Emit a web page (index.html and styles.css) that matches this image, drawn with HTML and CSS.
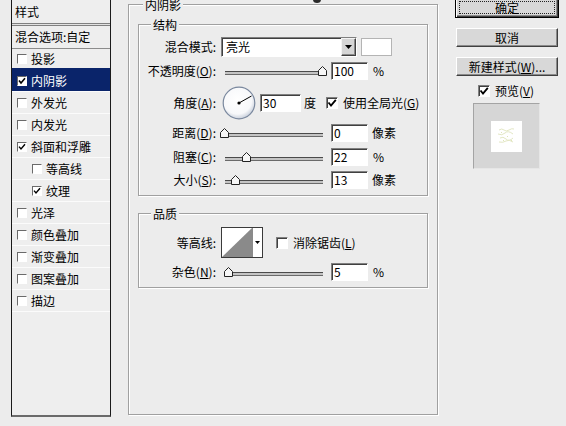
FILE: index.html
```html
<!DOCTYPE html>
<html lang="zh-CN">
<head>
<meta charset="utf-8">
<title>图层样式</title>
<link rel="stylesheet" href="styles.css">
</head>
<body>
<div class="dlg">
  <div class="styles">
    <div class="st-head">样式</div>
    <div class="st-dbl"></div>
    <div class="st-blend">混合选项:自定</div>
    <div class="st-item first"><span class="cbs"></span>投影</div>
    <div class="st-item sel"><span class="cbs"><svg width="8" height="8" viewBox="0 0 8 8"><polyline points="1,3.6 3,6 7,1.3" fill="none" stroke="#000" stroke-width="1.6"/></svg></span>内阴影</div>
    <div class="st-item"><span class="cbs"></span>外发光</div>
    <div class="st-item"><span class="cbs"></span>内发光</div>
    <div class="st-item"><span class="cbs"><svg width="8" height="8" viewBox="0 0 8 8"><polyline points="1,3.6 3,6 7,1.3" fill="none" stroke="#000" stroke-width="1.4"/></svg></span>斜面和浮雕</div>
    <div class="st-item sub"><span class="cbs"></span>等高线</div>
    <div class="st-item sub"><span class="cbs"><svg width="8" height="8" viewBox="0 0 8 8"><polyline points="1,3.6 3,6 7,1.3" fill="none" stroke="#000" stroke-width="1.4"/></svg></span>纹理</div>
    <div class="st-item"><span class="cbs"></span>光泽</div>
    <div class="st-item"><span class="cbs"></span>颜色叠加</div>
    <div class="st-item"><span class="cbs"></span>渐变叠加</div>
    <div class="st-item"><span class="cbs"></span>图案叠加</div>
    <div class="st-item"><span class="cbs"></span>描边</div>
    <div class="st-end"></div>
  </div>

  <div class="main">
    <div class="grp outer">
      <div class="gt">内阴影</div>

      <div class="grp inner struct">
        <div class="gt">结构</div>

        <div class="row r1">
          <div class="lbl">混合模式:</div>
          <div class="select"><span class="sv">亮光</span><span class="sbtn"><svg width="7" height="4" viewBox="0 0 7 4"><polygon points="0,0 7,0 3.5,4" fill="#000"/></svg></span></div>
          <div class="swatch"></div>
        </div>

        <div class="row r2">
          <div class="lbl">不透明度(<u>O</u>):</div>
          <div class="slider"><div class="track"></div><span class="thumb" style="left:97px"><svg width="9" height="10" viewBox="0 0 9 10"><polygon points="0.5,9.5 0.5,4.5 4.5,0.5 8.5,4.5 8.5,9.5" fill="#f6f6f6" stroke="#222"/></svg></span></div>
          <div class="num">100</div>
          <div class="unit">%</div>
        </div>

        <div class="row r3">
          <div class="lbl">角度(<u>A</u>):</div>
          <div class="dial"><svg width="34" height="34" viewBox="0 0 34 34">
            <defs><radialGradient id="dg" cx="45%" cy="40%" r="60%"><stop offset="0" stop-color="#ffffff"/><stop offset="0.75" stop-color="#f7f8fa"/><stop offset="1" stop-color="#c9d0dc"/></radialGradient></defs>
            <circle cx="17" cy="17" r="15.8" fill="url(#dg)" stroke="#7a889e" stroke-width="1.2"/>
            <line x1="17" y1="17" x2="29.5" y2="10" stroke="#000" stroke-width="1"/>
            <circle cx="17" cy="17" r="1.6" fill="#000"/>
          </svg></div>
          <div class="num w41">30</div>
          <div class="unit deg">度</div>
          <span class="cb gl"><svg width="10" height="10" viewBox="0 0 10 10"><polyline points="1.5,4.5 4,7.5 8.8,1.8" fill="none" stroke="#000" stroke-width="1.8"/></svg></span>
          <div class="cbl">使用全局光(<u>G</u>)</div>
        </div>

        <div class="row r4">
          <div class="lbl">距离(<u>D</u>):</div>
          <div class="slider"><div class="track"></div><span class="thumb" style="left:-1px"><svg width="9" height="10" viewBox="0 0 9 10"><polygon points="0.5,9.5 0.5,4.5 4.5,0.5 8.5,4.5 8.5,9.5" fill="#f6f6f6" stroke="#222"/></svg></span></div>
          <div class="num">0</div>
          <div class="unit px">像素</div>
        </div>

        <div class="row r5">
          <div class="lbl">阻塞(<u>C</u>):</div>
          <div class="slider"><div class="track"></div><span class="thumb" style="left:21px"><svg width="9" height="10" viewBox="0 0 9 10"><polygon points="0.5,9.5 0.5,4.5 4.5,0.5 8.5,4.5 8.5,9.5" fill="#f6f6f6" stroke="#222"/></svg></span></div>
          <div class="num">22</div>
          <div class="unit">%</div>
        </div>

        <div class="row r6">
          <div class="lbl">大小(<u>S</u>):</div>
          <div class="slider"><div class="track"></div><span class="thumb" style="left:10px"><svg width="9" height="10" viewBox="0 0 9 10"><polygon points="0.5,9.5 0.5,4.5 4.5,0.5 8.5,4.5 8.5,9.5" fill="#f6f6f6" stroke="#222"/></svg></span></div>
          <div class="num">13</div>
          <div class="unit px">像素</div>
        </div>
      </div>

      <div class="grp inner qual">
        <div class="gt">品质</div>

        <div class="row q1">
          <div class="lbl">等高线:</div>
          <div class="contour">
            <span class="cprev"><svg width="30" height="29" viewBox="0 0 30 29"><polygon points="0,29 30,0 30,29" fill="#8a8a8a"/></svg></span>
            <span class="cbtn"><svg width="5" height="3" viewBox="0 0 5 3"><polygon points="0,0 5,0 2.5,3" fill="#000"/></svg></span>
          </div>
          <span class="cb aa"></span>
          <div class="cbl">消除锯齿(<u>L</u>)</div>
        </div>

        <div class="row q2">
          <div class="lbl">杂色(<u>N</u>):</div>
          <div class="slider"><div class="track"></div><span class="thumb" style="left:3px"><svg width="9" height="10" viewBox="0 0 9 10"><polygon points="0.5,9.5 0.5,4.5 4.5,0.5 8.5,4.5 8.5,9.5" fill="#f6f6f6" stroke="#222"/></svg></span></div>
          <div class="num">5</div>
          <div class="unit">%</div>
        </div>
      </div>
    </div>
  </div>

  <div class="side">
    <div class="btn ok"><span class="focus">确定</span></div>
    <div class="btn">取消</div>
    <div class="btn">新建样式(<u>W</u>)...</div>
    <div class="pvrow">
      <span class="cb"><svg width="10" height="10" viewBox="0 0 10 10"><polyline points="1.5,4.5 4,7.5 8.8,1.8" fill="none" stroke="#000" stroke-width="1.8"/></svg></span>
      <span class="cbl">预览(<u>V</u>)</span>
    </div>
    <div class="pvbox">
      <div class="pvin"><svg width="31" height="31" viewBox="0 0 31 31">
        <g stroke="#e3e7c4" stroke-width="1" fill="none">
          <path d="M8 9 q3 -2 5 0 t5 0 t5 -1"/>
          <path d="M7 13 q4 2 7 -1 t8 1"/>
          <path d="M9 17 q3 -2 6 1 t7 -1"/>
          <path d="M8 21 q4 1 7 -1 t7 1"/>
        </g>
        <g fill="#dfe4b8">
          <rect x="10" y="11" width="1" height="1"/><rect x="16" y="15" width="1" height="1"/>
          <rect x="20" y="19" width="1" height="1"/><rect x="12" y="19" width="1" height="1"/>
        </g>
      </svg></div>
    </div>
  </div>
</div>
<span class="blob"></span>
</body>
</html>
```

FILE: styles.css
```css
* { box-sizing: border-box; }

html, body {
  margin: 0;
  padding: 0;
}

body {
  width: 566px;
  height: 426px;
  overflow: hidden;
  position: relative;
  background: #ececec;
  color: #000;
  font-family: "Noto Sans CJK SC", "Noto Sans", "Liberation Sans", sans-serif;
  font-size: 12px;
  line-height: 14px;
}

u { text-decoration: underline; text-underline-offset: 1px; }

.dlg {
  display: flex;
  align-items: flex-start;
}

/* ---------- left style list ---------- */
.styles {
  margin-left: 11px;
  width: 100px;
  height: 417px;
  border-left: 1px solid #1a1a1a;
  border-right: 1px solid #1a1a1a;
  border-bottom: 2px solid #6a6a6a;
  background: #eeeeee;
  flex: none;
}

.st-head {
  height: 23px;
  line-height: 23px;
  padding-left: 3px;
}

.st-dbl {
  height: 3px;
  border-top: 1px solid #808080;
  border-bottom: 1px solid #808080;
  background: #e2e2e2;
}

.st-blend {
  height: 23px;
  line-height: 22px;
  padding-left: 3px;
  border-bottom: 1px solid #8c8c8c;
}

.st-item {
  height: 22px;
  display: flex;
  align-items: center;
  padding-left: 5px;
  border-top: 1px solid #fbfbfb;
  white-space: nowrap;
}

.st-item.first {
  height: 20px;
  border-top: 0;
}

.st-item.sub { padding-left: 20px; }

.st-item.sel {
  background: #0a246a;
  color: #fff;
  border-top-color: #0a246a;
  box-shadow: 0 -1px 0 #0a246a;
}

.st-end {
  height: 1px;
  background: #fbfbfb;
}

.cbs {
  width: 10px;
  height: 10px;
  flex: none;
  margin-right: 4px;
  border: 1px solid;
  border-color: #6a6a6a #ffffff #ffffff #6a6a6a;
  background: #fff;
  display: flex;
  align-items: center;
  justify-content: center;
}

/* ---------- middle panel ---------- */
.main {
  margin-left: 17px;
  width: 310px;
  flex: none;
}

.grp {
  border: 1px solid #a0a0a0;
  box-shadow: 1px 1px 0 #ffffff, inset 1px 1px 0 #ffffff;
}

.outer {
  margin-top: 4px;
  width: 310px;
  height: 411px;
}

.gt {
  width: max-content;
  height: 13px;
  line-height: 13px;
  margin: -7px 0 0 14px;
  padding: 0 2px;
  background: #ececec;
}

.inner {
  margin-left: 9px;
  width: 290px;
}

.inner .gt { margin-left: 12px; }

.struct {
  margin-top: 13px;
  height: 172px;
}

.qual {
  margin-top: 17px;
  height: 75px;
}

.row {
  display: flex;
  align-items: center;
}

.lbl {
  width: 77px;
  margin-right: 5px;
  text-align: right;
  white-space: nowrap;
  flex: none;
}

.r1 { margin-top: 6px; height: 20px; }
.r2 { margin-top: 5px; height: 18px; }
.r3 { margin-top: 6px; height: 34px; }
.r4 { margin-top: 4px; height: 18px; }
.r5 { margin-top: 6px; height: 18px; }
.r6 { margin-top: 5px; height: 18px; }
.q1 { margin-top: 7px; height: 31px; }
.q2 { margin-top: 5px; height: 18px; }

.select {
  width: 136px;
  height: 20px;
  display: flex;
  align-items: stretch;
  border: 1px solid;
  border-color: #808080 #ffffff #ffffff #808080;
  box-shadow: inset 1px 1px 0 #404040;
  background: #fff;
}

.sv {
  flex: 1;
  padding-left: 4px;
  line-height: 18px;
}

.sbtn {
  width: 15px;
  display: flex;
  align-items: center;
  justify-content: center;
  background: #d6d6d6;
  border: 1px solid;
  border-color: #f4f4f4 #404040 #404040 #f4f4f4;
  box-shadow: inset -1px -1px 0 #8a8a8a;
}

.swatch {
  margin-left: 4px;
  width: 31px;
  height: 18px;
  border: 1px solid #b4b4b4;
  background: #ffffff;
}

.slider {
  position: relative;
  width: 110px;
  height: 18px;
  flex: none;
  display: flex;
  align-items: center;
}

.track {
  margin-left: 4px;
  margin-top: 3px;
  width: 98px;
  height: 4px;
  border-top: 1px solid #4a4a4a;
  border-bottom: 1px solid #6a6a6a;
  background: #c4c4c4;
}

.thumb {
  position: absolute;
  top: 4px;
  width: 9px;
  height: 10px;
  display: block;
}

.thumb svg { display: block; }

.num {
  width: 37px;
  height: 18px;
  flex: none;
  padding-left: 2px;
  line-height: 16px;
  border: 1px solid;
  border-color: #808080 #ffffff #ffffff #808080;
  box-shadow: inset 1px 1px 0 #404040;
  background: #ffffff;
}

.num.w41 { width: 41px; margin-left: 4px; }

.unit { margin-left: 5px; white-space: nowrap; }
.unit.px { margin-left: 4px; }
.unit.deg { margin-left: 3px; }

.dial {
  margin-left: 1px;
  width: 34px;
  height: 34px;
  flex: none;
}

.dial svg { display: block; }

.cb {
  width: 12px;
  height: 12px;
  flex: none;
  border: 1px solid;
  border-color: #808080 #ffffff #ffffff #808080;
  box-shadow: inset 1px 1px 0 #404040;
  background: #ffffff;
  display: flex;
  align-items: center;
  justify-content: center;
}

.cb.gl { margin-left: 10px; }
.cb.aa { margin-left: 13px; }

.cbl {
  margin-left: 5px;
  white-space: nowrap;
}

.contour {
  width: 42px;
  height: 31px;
  flex: none;
  display: flex;
  border: 1px solid #3a3a3a;
  background: #ffffff;
}

.cprev {
  width: 30px;
  display: block;
}

.cprev svg { display: block; }

.cbtn {
  flex: 1;
  border-left: 1px solid #8a8a8a;
  display: flex;
  align-items: center;
  justify-content: center;
}

/* ---------- right column ---------- */
.side {
  margin-left: 17px;
  width: 104px;
  flex: none;
  display: flex;
  flex-direction: column;
}

.btn {
  margin-top: 10px;
  margin-left: 1px;
  width: 102px;
  height: 19px;
  display: flex;
  align-items: center;
  justify-content: center;
  white-space: nowrap;
  background: #d8d8d8;
  border: 1px solid;
  border-color: #ffffff #404040 #404040 #ffffff;
  box-shadow: inset -1px -1px 0 #8a8a8a;
}

.btn.ok {
  margin-top: -3px;
  margin-left: 0;
  width: 104px;
  height: 21px;
  border: 1px solid #000;
  box-shadow: inset 1px 1px 0 #ffffff, inset -1px -1px 0 #404040, inset -2px -2px 0 #8a8a8a;
  padding: 3px;
  align-items: stretch;
}

.focus {
  flex: 1;
  display: flex;
  align-items: center;
  justify-content: center;
  border: 1px dotted #222;
}

.pvrow {
  margin-top: 8px;
  height: 13px;
  display: flex;
  align-items: center;
}

.pvrow .cb { margin-left: 23px; }

.pvbox {
  margin-top: 6px;
  margin-left: 18px;
  width: 67px;
  height: 66px;
  background: #d6d6d6;
  border: 1px solid;
  border-color: #a4a4a4 #e6e6e6 #e6e6e6 #a4a4a4;
  padding: 17px 0 0 17px;
}

.pvin {
  width: 31px;
  height: 31px;
  background: #ffffff;
}

.pvin svg { display: block; }

.blob {
  position: absolute;
  left: 313px;
  top: -4px;
  width: 8px;
  height: 7px;
  border-radius: 50%;
  background: #2a2a2a;
}
```
